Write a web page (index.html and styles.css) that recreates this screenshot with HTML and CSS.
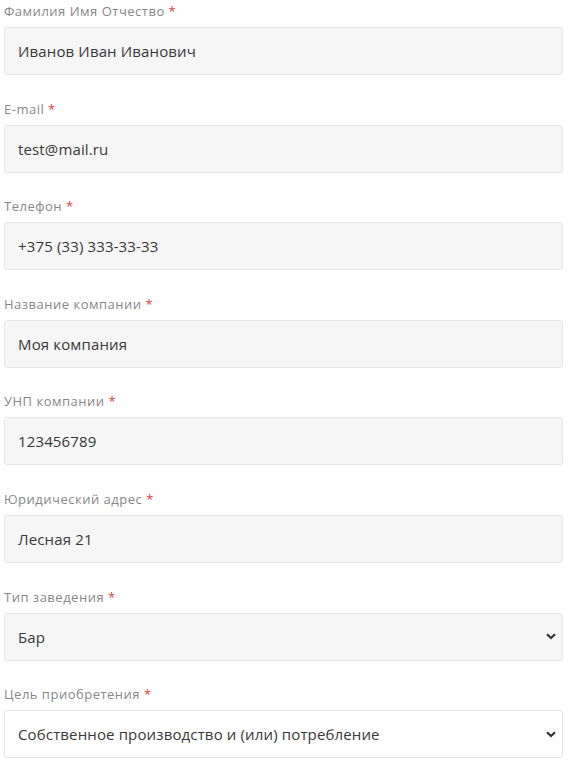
FILE: index.html
```html
<!DOCTYPE html>
<html lang="ru">
<head>
<meta charset="utf-8">
<link rel="stylesheet" href="styles.css">
</head>
<body>
<form class="form">
  <div class="field">
    <label class="label">Фамилия Имя Отчество <span class="req">*</span></label>
    <input class="control" type="text" value="Иванов Иван Иванович">
  </div>
  <div class="field">
    <label class="label">E-mail <span class="req">*</span></label>
    <input class="control" type="text" value="test@mail.ru">
  </div>
  <div class="field">
    <label class="label">Телефон <span class="req">*</span></label>
    <input class="control" type="text" value="+375 (33) 333-33-33">
  </div>
  <div class="field">
    <label class="label">Название компании <span class="req">*</span></label>
    <input class="control" type="text" value="Моя компания">
  </div>
  <div class="field">
    <label class="label">УНП компании <span class="req">*</span></label>
    <input class="control" type="text" value="123456789">
  </div>
  <div class="field">
    <label class="label">Юридический адрес <span class="req">*</span></label>
    <input class="control" type="text" value="Лесная 21">
  </div>
  <div class="field">
    <label class="label">Тип заведения <span class="req">*</span></label>
    <select class="control select">
      <option>Бар</option>
    </select>
  </div>
  <div class="field">
    <label class="label">Цель приобретения <span class="req">*</span></label>
    <select class="control select select-white">
      <option>Собственное производство и (или) потребление</option>
    </select>
  </div>
</form>
</body>
</html>
```
FILE: styles.css
```css
html, body {
  margin: 0;
  padding: 0;
  background: #ffffff;
}
body {
  font-family: "Open Sans", "Noto Sans", sans-serif;
}
.form {
  display: flex;
  flex-direction: column;
  padding: 0 5px 0 4px;
  width: 559px;
}
.field {
  display: flex;
  flex-direction: column;
  margin-bottom: 22.6px;
}
.label {
  display: block;
  height: 20px;
  line-height: 22px;
  margin-bottom: 7px;
  font-size: 13px;
  color: #878787;
  letter-spacing: 0.5px;
}
.req {
  color: #e53a3a;
}
.control {
  box-sizing: border-box;
  height: 48px;
  width: 559px;
  margin: 0;
  padding: 0 13px;
  border: 1px solid #e6e6e6;
  border-radius: 3px;
  background: #f6f6f6;
  font-family: inherit;
  font-size: 15px;
  letter-spacing: 0.14px;
  color: #383838;
  outline: none;
}
.select {
  appearance: none;
  -webkit-appearance: none;
  background-image: url("data:image/svg+xml;utf8,<svg xmlns='http://www.w3.org/2000/svg' width='10' height='7' viewBox='0 0 10 7'><path d='M1 1.2 L5 5 L9 1.2' fill='none' stroke='%23333' stroke-width='2.2'/></svg>");
  background-repeat: no-repeat;
  background-position: right 6px center;
  background-size: 10px 7px;
}
.select-white {
  background-color: #ffffff;
}
```
